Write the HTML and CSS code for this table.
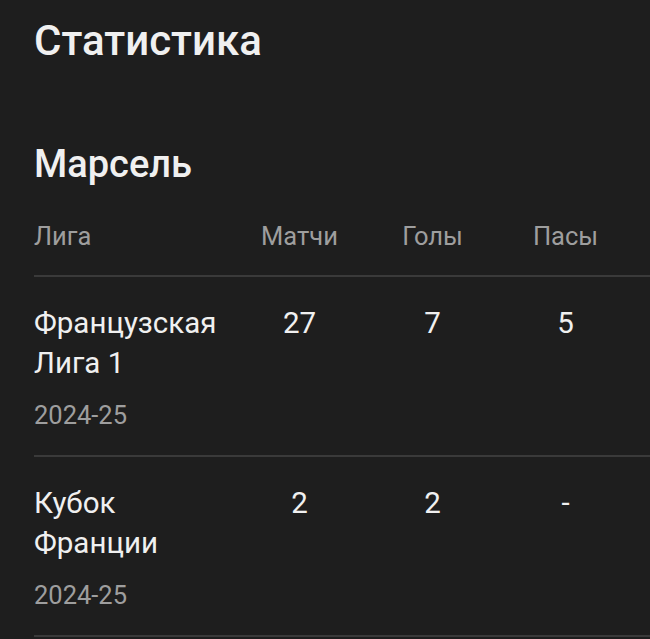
FILE: index.html
```html
<!DOCTYPE html>
<html lang="ru">
<head>
    <meta charset="UTF-8">
    <meta name="viewport" content="width=device-width, initial-scale=1.0">
    <title>Статистика</title>
    <link rel="stylesheet" href="styles.css">
</head>
<body>
    <div class="page">
        <h1 class="page-title">Статистика</h1>

        <section class="club">
            <h2 class="club-name">Марсель</h2>

            <div class="stats-head">
                <div class="col-league">Лига</div>
                <div class="col-num">Матчи</div>
                <div class="col-num">Голы</div>
                <div class="col-num">Пасы</div>
            </div>

            <div class="stats-row">
                <div class="col-league">
                    <div class="league-name">Французская Лига 1</div>
                    <div class="season">2024-25</div>
                </div>
                <div class="col-num">27</div>
                <div class="col-num">7</div>
                <div class="col-num">5</div>
            </div>

            <div class="stats-row">
                <div class="col-league">
                    <div class="league-name">Кубок Франции</div>
                    <div class="season">2024-25</div>
                </div>
                <div class="col-num">2</div>
                <div class="col-num">2</div>
                <div class="col-num">-</div>
            </div>
        </section>
    </div>
</body>
</html>
```

FILE: styles.css
```css
body {
    margin: 0;
    background-color: #1e1e1e;
    color: #f0f0f0;
    font-family: Roboto, "Noto Sans", sans-serif;
}
.page {
    padding: 17px 0 0 34px;
}
.page-title {
    margin: 0;
    font-size: 42px;
    line-height: 48px;
    font-weight: 500;
}
.club-name {
    margin: 77px 0 0;
    font-size: 38px;
    line-height: 44px;
    font-weight: 500;
}
.stats-head,
.stats-row {
    display: grid;
    grid-template-columns: 199px 133px 133px 133px 1fr;
    border-bottom: 2px solid #3a3a3a;
}
.stats-head {
    margin-top: 35px;
    padding-bottom: 24px;
    font-size: 25.5px;
    line-height: 30px;
    color: #9e9e9e;
}
.stats-row {
    padding: 26px 0 25px;
    font-size: 29.5px;
    line-height: 40px;
}
.col-num {
    text-align: center;
}
.season {
    margin-top: 17px;
    font-size: 25.5px;
    line-height: 30px;
    color: #9e9e9e;
}
```
